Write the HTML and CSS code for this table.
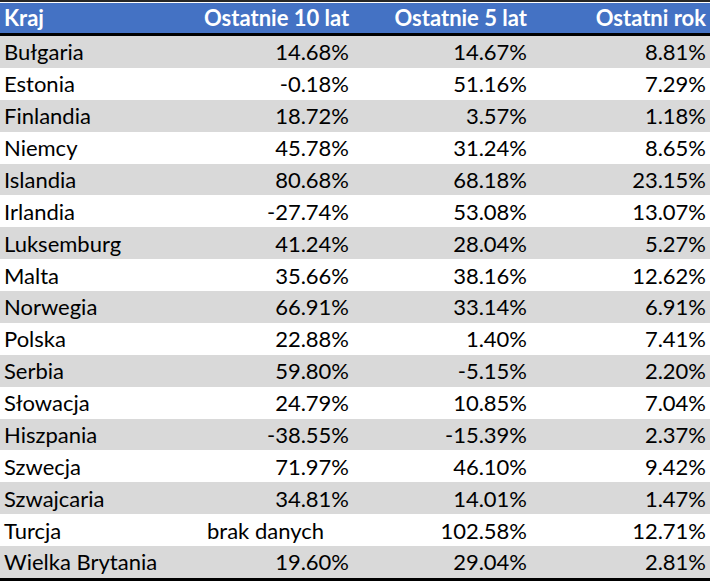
FILE: index.html
```html
<!DOCTYPE html>
<html lang="pl">
<head>
<meta charset="utf-8">
<title>Tabela</title>
<link rel="stylesheet" href="styles.css">
</head>
<body>
<div class="wrap">
<table class="data">
<colgroup>
<col class="c1"><col class="c2"><col class="c3"><col class="c4">
</colgroup>
<thead>
<tr><th class="name">Kraj</th><th>Ostatnie 10 lat</th><th>Ostatnie 5 lat</th><th>Ostatni rok</th></tr>
</thead>
<tbody>
<tr><td class="name">Bułgaria</td><td>14.68%</td><td>14.67%</td><td>8.81%</td></tr>
<tr><td class="name">Estonia</td><td>-0.18%</td><td>51.16%</td><td>7.29%</td></tr>
<tr><td class="name">Finlandia</td><td>18.72%</td><td>3.57%</td><td>1.18%</td></tr>
<tr><td class="name">Niemcy</td><td>45.78%</td><td>31.24%</td><td>8.65%</td></tr>
<tr><td class="name">Islandia</td><td>80.68%</td><td>68.18%</td><td>23.15%</td></tr>
<tr><td class="name">Irlandia</td><td>-27.74%</td><td>53.08%</td><td>13.07%</td></tr>
<tr><td class="name">Luksemburg</td><td>41.24%</td><td>28.04%</td><td>5.27%</td></tr>
<tr><td class="name">Malta</td><td>35.66%</td><td>38.16%</td><td>12.62%</td></tr>
<tr><td class="name">Norwegia</td><td>66.91%</td><td>33.14%</td><td>6.91%</td></tr>
<tr><td class="name">Polska</td><td>22.88%</td><td>1.40%</td><td>7.41%</td></tr>
<tr><td class="name">Serbia</td><td>59.80%</td><td>-5.15%</td><td>2.20%</td></tr>
<tr><td class="name">Słowacja</td><td>24.79%</td><td>10.85%</td><td>7.04%</td></tr>
<tr><td class="name">Hiszpania</td><td>-38.55%</td><td>-15.39%</td><td>2.37%</td></tr>
<tr><td class="name">Szwecja</td><td>71.97%</td><td>46.10%</td><td>9.42%</td></tr>
<tr><td class="name">Szwajcaria</td><td>34.81%</td><td>14.01%</td><td>1.47%</td></tr>
<tr><td class="name">Turcja</td><td class="text">brak danych</td><td>102.58%</td><td>12.71%</td></tr>
<tr><td class="name">Wielka Brytania</td><td>19.60%</td><td>29.04%</td><td>2.81%</td></tr>
</tbody>
</table>
</div>
</body>
</html>
```

FILE: styles.css
```css
html, body {
  margin: 0;
  padding: 0;
  background: #ffffff;
}

.wrap {
  width: 710px;
  border-top: 2px solid #262626;
  padding-top: 1px;
}

.data {
  width: 710px;
  border-collapse: collapse;
  table-layout: fixed;
  font-family: Lato, "Liberation Sans", sans-serif;
  font-size: 22px;
  color: #000000;
  border-bottom: 3px solid #000000;
}

.c1 { width: 204px; }
.c2 { width: 149px; }
.c3 { width: 178px; }
.c4 { width: 179px; }

.data th {
  background: #4472c4;
  color: #ffffff;
  font-weight: 700;
  height: 30px;
  padding: 0 4px 0 0;
  text-align: right;
  border-bottom: 3px solid #000000;
  line-height: 30px;
  white-space: nowrap;
}

.data td {
  height: 31.88px;
  padding: 0 4px 0 0;
  text-align: right;
  line-height: 31px;
  white-space: nowrap;
}

.data th.name,
.data td.name {
  text-align: left;
  padding: 0 0 0 4px;
}

.data td.text {
  text-align: left;
  padding-left: 3px;
}

.data tbody tr:nth-child(odd) td {
  background: #d9d9d9;
}
```
